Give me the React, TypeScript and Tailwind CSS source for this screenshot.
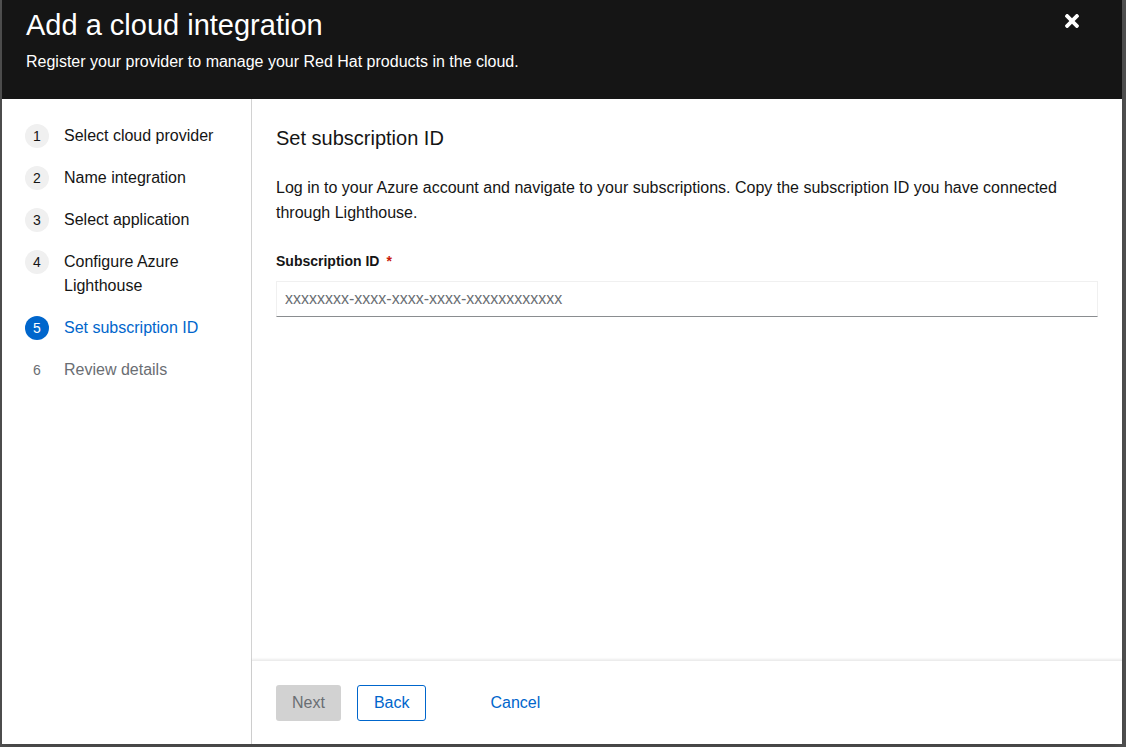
import React from 'react';

const steps = [
  { id: 1, name: 'Select cloud provider', state: 'done' },
  { id: 2, name: 'Name integration', state: 'done' },
  { id: 3, name: 'Select application', state: 'done' },
  { id: 4, name: 'Configure Azure Lighthouse', state: 'done' },
  { id: 5, name: 'Set subscription ID', state: 'current' },
  { id: 6, name: 'Review details', state: 'todo' },
];

const TimesIcon = () => (
  <svg viewBox="0 80 352 352" width="14" height="14" fill="currentColor" aria-hidden="true">
    <path d="M242.72 256l100.07-100.07c12.28-12.28 12.28-32.19 0-44.48l-22.24-22.240c-12.28-12.28-32.19-12.28-44.48 0L176 189.28 75.93 89.21c-12.28-12.28-32.19-12.28-44.48 0L9.21 111.45c-12.28 12.28-12.28 32.19 0 44.48L109.28 256 9.21 356.07c-12.28 12.28-12.28 32.19 0 44.48l22.24 22.24c12.28 12.28 32.2 12.28 44.48 0L176 322.72l100.07 100.07c12.28 12.28 32.2 12.28 44.48 0l22.24-22.24c12.28-12.28 12.28-32.19 0-44.48L242.72 256z" />
  </svg>
);

const App = () => {
  return (
    <div
      className="w-full h-[747px] bg-[#505050] pl-[2px] pr-[4px] pb-[3px] flex"
      style={{ fontFamily: '"Liberation Sans", Arial, sans-serif' }}
    >
      <div className="flex-1 flex flex-col bg-white shadow-lg">
        {/* Header */}
        <header className="relative bg-[#151515] text-white pl-6 pr-12 pt-[8px] pb-[25px]">
          <h1 className="text-[29px] leading-[34px] font-normal">Add a cloud integration</h1>
          <p className="mt-2 text-base leading-6">Register your provider to manage your Red Hat products in the cloud.</p>
          <button className="absolute top-[14px] right-[43px] text-white" aria-label="Close">
            <TimesIcon />
          </button>
        </header>

        <div className="flex-1 flex min-h-0">
          {/* Nav */}
          <nav className="w-[250px] shrink-0 border-r border-[#d2d2d2] pt-[25px] px-[23px]">
            <ol className="flex flex-col gap-[18px]">
              {steps.map((s) => (
                <li key={s.id} className="flex items-start gap-[15px]">
                  <span
                    className={`w-6 h-6 shrink-0 rounded-full flex items-center justify-center text-sm ${
                      s.state === 'current'
                        ? 'bg-[#0066cc] text-white'
                        : s.state === 'done'
                        ? 'bg-[#f0f0f0] text-[#151515]'
                        : 'text-[#6a6e73]'
                    }`}
                  >
                    {s.id}
                  </span>
                  <span
                    className={`text-base leading-6 ${
                      s.state === 'current'
                        ? 'text-[#0066cc]'
                        : s.state === 'done'
                        ? 'text-[#151515]'
                        : 'text-[#6a6e73]'
                    }`}
                  >
                    {s.name === 'Configure Azure Lighthouse' ? (
                      <>
                        Configure Azure
                        <br />
                        Lighthouse
                      </>
                    ) : (
                      s.name
                    )}
                  </span>
                </li>
              ))}
            </ol>
          </nav>

          {/* Main */}
          <div className="flex-1 flex flex-col min-w-0">
            <main className="flex-1 px-6 pt-6 text-[#151515]">
              <h2 className="text-xl leading-[30px]">Set subscription ID</h2>
              <p className="mt-[22px] text-base leading-[25px] pr-10">
                Log in to your Azure account and navigate to your subscriptions. Copy the subscription ID you have connected
                through Lighthouse.
              </p>
              <div className="mt-[24px]">
                <label className="text-sm leading-[21px] font-bold">
                  Subscription ID
                  <span className="text-[#c9190b] ml-[7px]">*</span>
                </label>
                <input
                  type="text"
                  placeholder="xxxxxxxx-xxxx-xxxx-xxxx-xxxxxxxxxxxx"
                  className="mt-[8px] block w-full h-9 px-2 text-base text-[#151515] placeholder:text-[#6a6e73] border border-[#f0f0f0] border-b-[#8a8d90] outline-none"
                  style={{ fontFamily: '"Liberation Sans", Arial, sans-serif' }}
                />
              </div>
            </main>

            {/* Footer */}
            <footer className="h-[84px] flex items-center px-6 shadow-[0_-1px_2px_rgba(0,0,0,0.08)] border-t border-[#ececec]">
              <button className="h-9 px-4 rounded-[3px] bg-[#d2d2d2] text-[#6a6e73] text-base" disabled>
                Next
              </button>
              <button className="ml-4 h-9 px-4 rounded-[3px] border border-[#0066cc] text-[#0066cc] text-base">
                Back
              </button>
              <button className="ml-12 h-9 px-4 text-[#0066cc] text-base">Cancel</button>
            </footer>
          </div>
        </div>
      </div>
    </div>
  );
};

export default App;
